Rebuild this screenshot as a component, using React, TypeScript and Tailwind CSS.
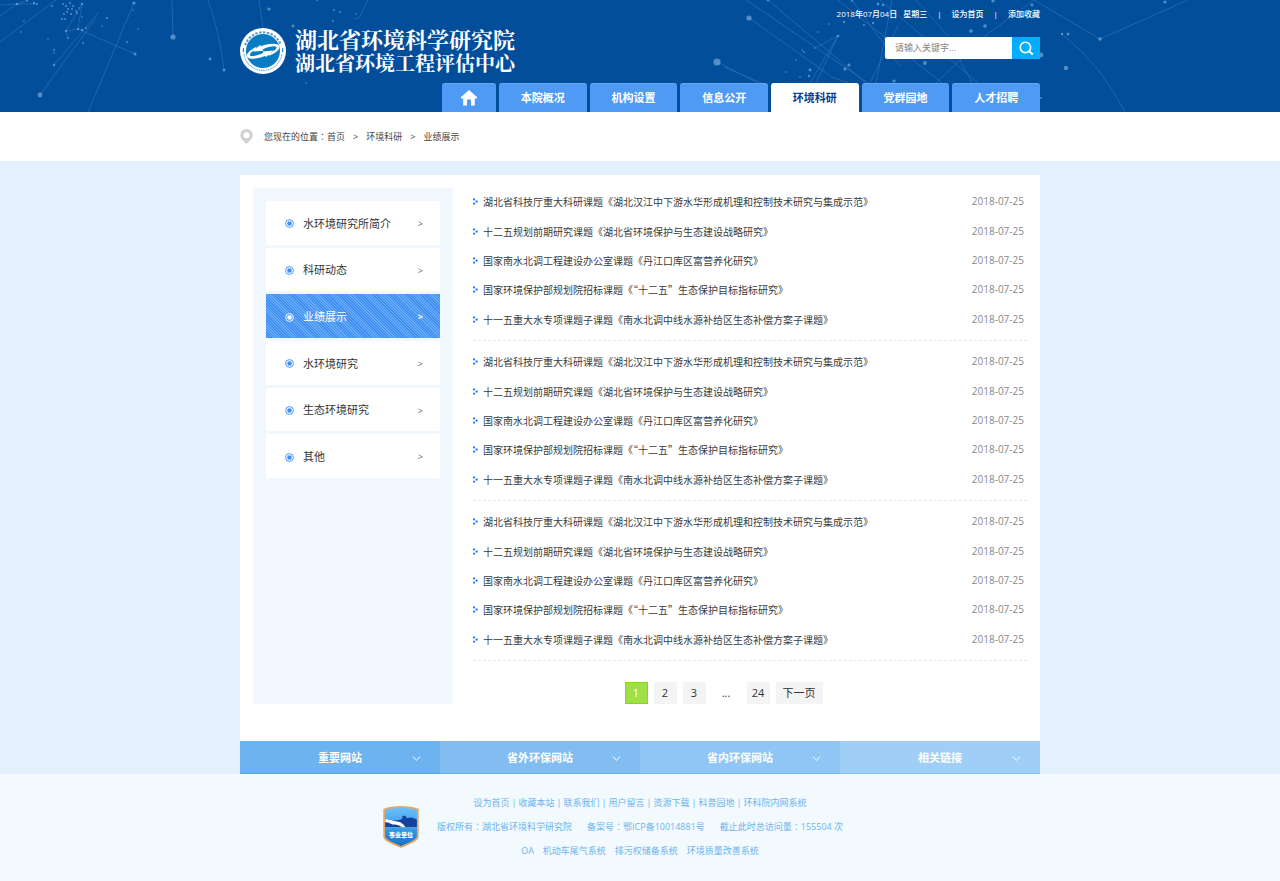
import React from "react";

const navItems = ["本院概况", "机构设置", "信息公开", "环境科研", "党群园地", "人才招聘"];
const currentNav = "环境科研";

const sideItems = ["水环境研究所简介", "科研动态", "业绩展示", "水环境研究", "生态环境研究", "其他"];
const currentSide = "业绩展示";

const articles = [
  "湖北省科技厅重大科研课题《湖北汉江中下游水华形成机理和控制技术研究与集成示范》",
  "十二五规划前期研究课题《湖北省环境保护与生态建设战略研究》",
  "国家南水北调工程建设办公室课题《丹江口库区富营养化研究》",
  "国家环境保护部规划院招标课题《“十二五”生态保护目标指标研究》",
  "十一五重大水专项课题子课题《南水北调中线水源补给区生态补偿方案子课题》",
];

const linkGroups = [
  { label: "重要网站", tone: "bg-[#6cb3f0] border-[#52a0ea]" },
  { label: "省外环保网站", tone: "bg-[#82bdf2] border-[#69acec]" },
  { label: "省内环保网站", tone: "bg-[#8fc6f5] border-[#78b6ef]" },
  { label: "相关链接", tone: "bg-[#9fcff6] border-[#86c0f2]" },
];

const footerLinks = ["设为首页", "收藏本站", "联系我们", "用户留言", "资源下载", "科普园地", "环科院内网系统"];

type Dot = [number, number, number];

const dots: Dot[] = [
  [40, 95, 2.4], [173, 37, 2.6], [135, 54, 1.5], [54, 65, 1.3], [54, 50, 1], [54, 53, 0.8], [48, 39, 0.8],
  [21, 32, 0.8], [24, 21, 0.8], [17, 4, 1.3], [27, 1, 1], [34, 3, 1.2], [37, 4, 1], [52, 6, 1], [66, 31, 1.2],
  [68, 38, 1], [78, 29, 1.2], [82, 30, 1.2], [86, 28, 0.9], [83, 43, 1], [107, 18, 1.1], [102, 26, 0.8],
  [127, 42, 0.9], [134, 3, 1.6], [138, 29, 0.8], [133, 10, 0.8], [63, 4, 1], [66, 6, 1.1], [70, 3, 1],
  [73, 6, 1], [68, 9, 1.1], [72, 9, 1], [76, 11, 1], [64, 14, 1], [67, 12, 1], [71, 14, 1.1], [62, 19, 1.1],
  [65, 19, 1], [82, 4, 1.2], [77, 13, 0.9], [82, 17, 0.8], [79, 8, 0.8], [210, 59, 1.5], [224, 70, 1.5],
  [269, 9, 1.6], [293, 26, 1.4], [334, 10, 1], [340, 12, 0.9], [333, 21, 1], [317, 0, 1], [356, 14, 0.8],
  [306, 83, 0.8], [749, 18, 2.6], [717, 62, 3.6], [768, 0, 1.4], [838, 36, 1.3], [818, 32, 0.8],
  [829, 24, 0.8], [844, 22, 1.2], [864, 25, 1], [873, 23, 1.2], [815, 48, 0.8], [804, 52, 0.9], [802, 50, 0.8],
  [796, 60, 0.8], [810, 70, 1.4], [809, 76, 1.2], [786, 72, 0.8], [800, 77, 0.8], [845, 69, 1.6],
  [849, 65, 1.6], [852, 1, 1], [878, 4, 1.4], [883, 5, 1.3], [925, 63, 1.9], [971, 31, 1.8], [985, 26, 1.8],
  [993, 1, 1.6], [1062, 34, 1.2], [1068, 34, 1.5], [1066, 68, 2.3], [1100, 39, 1.8], [1165, 2, 1.6],
  [894, 81, 1.6], [1041, 55, 2.4], [1032, 5, 1.4], [1041, 98, 1],
];

const lines = [
  "M0 5 17 4 37 4", "M0 42 56 0", "M0 16 17 4 28 0", "M40 95 96 18", "M54 65 99 12", "M66 31 82 4 78 29 66 31 68 38",
  "M78 29 135 54", "M172 0 173 37", "M134 3 88 112", "M208 0Q219 30 224 70", "M259 0 263 28",
  "M368 0 359 18 353 19", "M749 18 832 77 848 83", "M746 0 868 83", "M768 0 866 83", "M717 62 758 83",
  "M724 67 762 83", "M838 36 815 48 M838 36 810 83 M838 36 816 83", "M838 0 942 83", "M852 0 900 66",
  "M892 0 876 83", "M880 0 978 83", "M898 26 870 83", "M916 0 948 36", "M1034 0 985 36 936 83",
  "M960 60 972 83", "M1034 0 1100 39 1188 0", "M1062 34Q1102 66 1125 112",
];

function HeaderBackdrop() {
  return (
    <svg
      className="absolute inset-0 h-full w-full"
      viewBox="0 0 1280 112"
      preserveAspectRatio="xMidYMin slice"
      aria-hidden="true"
    >
      <g fill="none" stroke="#8db8e6" strokeWidth="0.8" opacity="0.28">
        {lines.map((d) => (
          <path key={d} d={d} />
        ))}
      </g>
      <g fill="#8fb9e4" opacity="0.58">
        {dots.map(([x, y, r]) => (
          <circle key={`${x}-${y}`} cx={x} cy={y} r={r} />
        ))}
      </g>
    </svg>
  );
}

function Emblem() {
  return (
    <svg className="h-[46px] w-[46px] shrink-0" viewBox="0 0 46 46" aria-hidden="true">
      <circle cx="23" cy="23" r="23" fill="#fff" />
      <circle cx="23" cy="23" r="17" fill="#0a7cc4" />
      <path
        d="M5.2 17.2A18.7 18.7 0 0 1 40.8 17.2"
        fill="none"
        stroke="#4d97cf"
        strokeWidth="2"
        strokeDasharray="2.4 1.5"
      />
      <path
        d="M4 26A19.2 19.2 0 0 0 42 26"
        fill="none"
        stroke="#5ea3d6"
        strokeWidth="1.2"
        strokeDasharray="1 0.8"
      />
      <path d="M3.4 20v4M42.6 20v4" stroke="#2f86c8" strokeWidth="1.2" />
      <path
        d="M12 23.6 20.4 16.8 20.6 18.4C27 15.6 38.6 14.2 39.4 18.4 39.9 21.8 35 25.4 28.6 27.8L28.8 26.2C33.6 23.8 37 20.8 36.4 19.2 35.6 17.4 28.4 18.6 22.6 21.4L23.4 22.8Z"
        fill="#fff"
      />
      <path
        d="M34 22.6 25.6 29.2 25.4 27.8C19 30.8 7.8 32.4 7 28.2 6.6 25 10.4 21.8 16.4 18.8L16.2 20.6C12 23 9.4 25.8 10 27.4 10.8 29 17.6 27.8 23.4 24.8L22.6 23.4Z"
        fill="#fff"
      />
    </svg>
  );
}

function Badge() {
  return (
    <svg className="h-[42px] w-[36px]" viewBox="0 0 36 42" role="img" aria-label="事业单位">
      <defs>
        <linearGradient id="shield" x1="0" y1="0" x2="0" y2="1">
          <stop offset="0" stopColor="#6cc0fb" />
          <stop offset="0.5" stopColor="#3ba0ea" />
          <stop offset="1" stopColor="#1170c0" />
        </linearGradient>
      </defs>
      <path
        d="M1.2 3.6C7 1.2 12 .9 18 .9S29 1.2 34.8 3.6V30C34.8 35.4 25 37.4 18 41 11 37.4 1.2 35.4 1.2 30Z"
        fill="url(#shield)"
        stroke="#e3a765"
        strokeWidth="1.8"
      />
      <path
        d="M2.2 14.6 5 13.2 12 14.5 18 13.5 19.6 12 19 10.5 22 9.6 24 12 29 11.6 33.8 13.4V21.4H2.2Z"
        fill="#17429c"
      />
      <path
        d="M2.4 13.2C7 13.2 11 15.2 14 15.6 18 16.2 20 17.6 22.4 21.2H19C16 18.8 12.6 18.4 9.6 18.4L5 16.4 2.2 16.2Z"
        fill="#fff"
      />
      <path d="M2.2 21.6H33.8" stroke="#7cc4f4" strokeWidth="0.6" />
      <text
        x="18"
        y="30.8"
        textAnchor="middle"
        fontSize="6"
        fontWeight="900"
        fill="#fff"
        fontFamily="'Noto Sans CJK SC', sans-serif"
      >
        事业单位
      </text>
    </svg>
  );
}

function Colon() {
  return <span className="font-['Noto_Sans_CJK_TC',sans-serif]">：</span>;
}

function Header() {
  return (
    <header className="relative bg-[#034e9b] text-white">
      <HeaderBackdrop />
      <div className="relative mx-auto w-full max-w-[800px]">
        <div className="flex h-[83px] justify-between">
          <a href="#" className="flex items-start gap-[9px] pt-[28px]">
            <Emblem />
            <span className="flex flex-col font-['Noto_Serif_CJK_SC','Source_Han_Serif_SC','Noto_Sans_CJK_SC',serif] font-bold whitespace-nowrap">
              <span className="text-[22px] leading-[22px]">湖北省环境科学研究院</span>
              <span className="text-[20px] leading-[26px]">湖北省环境工程评估中心</span>
            </span>
          </a>
          <div className="flex flex-col items-end pt-[8px]">
            <div className="flex h-[12px] items-center gap-[10px] text-[8px] font-medium whitespace-nowrap">
              <span className="flex gap-[6px]">
                <span>2018年07月04日</span>
                <span>星期三</span>
              </span>
              <span>|</span>
              <a href="#">设为首页</a>
              <span>|</span>
              <a href="#">添加收藏</a>
            </div>
            <form className="mt-[17px] flex h-[22px] w-[155px] overflow-hidden rounded-[2px] bg-white">
              <input
                type="text"
                aria-label="请输入关键字"
                placeholder="请输入关键字..."
                className="min-w-0 flex-1 pl-[10px] text-[9px] text-[#333] outline-none placeholder:text-[#858585]"
              />
              <button type="button" aria-label="搜索" className="flex w-[28px] items-center justify-center bg-[#00adff]">
                <svg className="h-[15px] w-[15px]" viewBox="0 0 15 15" fill="none" stroke="#fff" aria-hidden="true">
                  <circle cx="6.4" cy="6.4" r="5.2" strokeWidth="1.6" />
                  <path d="M10.4 10.4 13.8 13.6" strokeWidth="2" />
                </svg>
              </button>
            </form>
          </div>
        </div>
        <nav className="ml-auto flex h-[29px] w-full max-w-[598px] gap-[3px] text-[11px] font-bold">
          <a
            href="#"
            aria-label="首页"
            className="flex w-[54px] items-center justify-center rounded-t-[3px] border-t border-[#62aaf9] bg-[#4f9af5]"
          >
            <svg className="h-[16px] w-[18px]" viewBox="0 0 18 16" fill="#fff" aria-hidden="true">
              <path d="M9 0 17.4 7.6 16.6 8.6H14.8V15.6H11V10.4Q11 9.2 9 9.2T7 10.4V15.6H3.2V8.6H1.4L.6 7.6Z" />
            </svg>
          </a>
          {navItems.map((item) => (
            <a
              key={item}
              href="#"
              aria-current={item === currentNav ? "page" : undefined}
              className={`flex flex-1 items-center justify-center rounded-t-[3px] border-t ${
                item === currentNav
                  ? "border-white bg-white text-[#0b3a8a]"
                  : "border-[#62aaf9] bg-[#4f9af5] text-white"
              }`}
            >
              {item}
            </a>
          ))}
        </nav>
      </div>
    </header>
  );
}

function Breadcrumb() {
  return (
    <div className="bg-white">
      <div className="mx-auto flex h-[49px] w-full max-w-[800px] items-center gap-[11px] text-[9px] text-[#444]">
        <svg className="h-[15px] w-[13px]" viewBox="0 0 13 15" aria-hidden="true">
          <path
            fillRule="evenodd"
            fill="#d2d2d2"
            d="M6.5 0A6.2 6.2 0 0 1 12.7 6.2C12.7 9.6 9.4 12.2 6.5 15 3.6 12.2.3 9.6.3 6.2A6.2 6.2 0 0 1 6.5 0ZM6.5 3.2A3 3 0 1 0 6.5 9.2 3 3 0 0 0 6.5 3.2Z"
          />
        </svg>
        <div className="flex gap-[8px]">
          <span>
            您现在的位置
            <Colon />
            <a href="#">首页</a>
          </span>
          <span>&gt;</span>
          <a href="#">环境科研</a>
          <span>&gt;</span>
          <span>业绩展示</span>
        </div>
      </div>
    </div>
  );
}

function Sidebar() {
  return (
    <aside className="my-[13px] ml-[13px] w-[200px] shrink-0 bg-[#f0f7ff] p-[13px]">
      <ul className="grid h-[277px] grid-rows-6 gap-[3px]">
        {sideItems.map((item) => {
          const active = item === currentSide;
          return (
            <li key={item}>
              <a
                href="#"
                className={`flex h-full items-center gap-[9px] pt-[2px] pr-[17px] pl-[19px] text-[11px] ${
                  active
                    ? "bg-[#4594f3] bg-[repeating-linear-gradient(45deg,#3f8ef1_0px,#3f8ef1_1px,#67a9f6_1px,#67a9f6_2px)] text-white"
                    : "bg-white text-[#333]"
                }`}
              >
                <svg
                  className={`h-[9px] w-[9px] ${active ? "text-white" : "text-[#3b8ff5]"}`}
                  viewBox="0 0 9 9"
                  aria-hidden="true"
                >
                  <circle cx="4.5" cy="4.5" r="3.9" fill="none" stroke="currentColor" strokeWidth="0.9" />
                  <circle cx="4.5" cy="4.5" r="2.3" fill="currentColor" />
                </svg>
                <span className="flex-1">{item}</span>
                <span className={`text-[9px] ${active ? "font-bold" : "text-[#666]"}`}>&gt;</span>
              </a>
            </li>
          );
        })}
      </ul>
    </aside>
  );
}

function ArticleGroup() {
  return (
    <ul className="grid h-[160px] grid-rows-5 border-b border-dashed border-[#e6e6e6] py-[6px]">
      {articles.map((title) => (
        <li key={title} className="flex items-center justify-between pr-[3px]">
          <a
            href="#"
            className="flex items-center gap-[5px] font-['Noto_Sans_CJK_SC',sans-serif] text-[10px] text-[#3a3a3a]"
          >
            <svg className="h-[7px] w-[5px]" viewBox="0 0 5 7" fill="#1673f5" aria-hidden="true">
              <path d="M0 .4H2V2.2H0ZM2.6 2.6H4.6V4.4H2.6ZM0 4.8H2V6.6H0Z" />
            </svg>
            {title}
          </a>
          <time className="text-[10px] text-[#888]">2018-07-25</time>
        </li>
      ))}
    </ul>
  );
}

function Pagination() {
  const page = "flex h-[22px] w-[23px] items-center justify-center";
  return (
    <nav aria-label="分页" className="mt-[21px] flex justify-center gap-[6px] pr-[53px] text-[11px] text-[#333]">
      <a href="#" aria-current="page" className={`${page} border border-[#86d722] bg-[#9fe046] text-white`}>
        1
      </a>
      <a href="#" className={`${page} bg-[#f4f4f4]`}>
        2
      </a>
      <a href="#" className={`${page} bg-[#f4f4f4]`}>
        3
      </a>
      <span className="flex h-[22px] w-[29px] items-center justify-center">...</span>
      <a href="#" className={`${page} bg-[#f4f4f4]`}>
        24
      </a>
      <a href="#" className="flex h-[22px] w-[47px] items-center justify-center bg-[#f4f4f4]">
        下一页
      </a>
    </nav>
  );
}

function LinkBar() {
  return (
    <div className="grid grid-cols-4 text-[11px] font-bold text-white">
      {linkGroups.map(({ label, tone }) => (
        <button
          key={label}
          type="button"
          className={`grid h-[33px] grid-cols-[1fr_auto_1fr] items-center border-b pt-[2px] ${tone}`}
        >
          <span className="col-start-2">{label}</span>
          <svg
            className="mr-[19px] h-[5px] w-[9px] justify-self-end"
            viewBox="0 0 9 5"
            fill="none"
            stroke="#fff"
            aria-hidden="true"
          >
            <path d="M.8.6 4.5 4.2 8.2.6" />
          </svg>
        </button>
      ))}
    </div>
  );
}

function Footer() {
  return (
    <footer className="bg-[#f2fafe] pt-[17px] pb-[18px] text-[9px] leading-[24px] text-[#6fb3ec]">
      <div className="mx-auto grid w-full max-w-[800px] grid-cols-[1fr_auto_1fr] items-center">
        <div className="mr-[18px] justify-self-end">
          <Badge />
        </div>
        <div className="flex flex-col items-center whitespace-nowrap">
          <div className="flex gap-[2px]">
            {footerLinks.map((link, i) => (
              <React.Fragment key={link}>
                {i > 0 && <span>|</span>}
                <a href="#">{link}</a>
              </React.Fragment>
            ))}
          </div>
          <div className="flex gap-[15px]">
            <span>
              版权所有
              <Colon />
              湖北省环境科学研究院
            </span>
            <span>
              备案号
              <Colon />
              鄂ICP备10014881号
            </span>
            <span>
              截止此时总访问量
              <Colon />
              155504 次
            </span>
          </div>
          <div className="flex gap-[9px]">
            <a href="#">OA</a>
            <a href="#">机动车尾气系统</a>
            <a href="#">排污权储备系统</a>
            <a href="#">环境质量改善系统</a>
          </div>
        </div>
      </div>
    </footer>
  );
}

export default function App() {
  return (
    <div className="bg-white font-['Open_Sans','Noto_Sans_CJK_SC',sans-serif]">
      <Header />
      <Breadcrumb />
      <div className="bg-[#e4f0fd] pt-[14px]">
        <main className="mx-auto w-full max-w-[800px] bg-white">
          <div className="flex pb-[24px]">
            <Sidebar />
            <section className="mt-[6px] mr-[13px] mb-[13px] ml-[20px] min-w-0 flex-1">
              <ArticleGroup />
              <ArticleGroup />
              <ArticleGroup />
              <Pagination />
            </section>
          </div>
          <LinkBar />
        </main>
      </div>
      <Footer />
    </div>
  );
}
